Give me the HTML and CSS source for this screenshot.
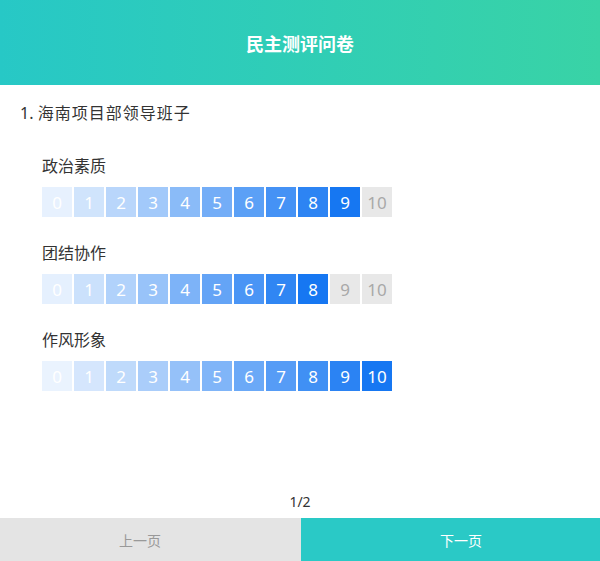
FILE: index.html
```html
<!DOCTYPE html>
<html lang="zh">
<head>
<meta charset="utf-8">
<title>民主测评问卷</title>
<link rel="stylesheet" href="styles.css">
</head>
<body>
<div class="page">
  <header class="header">民主测评问卷</header>
  <main class="content">
    <div class="question"><span class="num">1.</span> <span class="qtext">海南项目部领导班子</span></div>
    <div class="group">
      <div class="label">政治素质</div>
      <div class="scale">
        <span class="box on" style="--a:0.1">0</span>
        <span class="box on" style="--a:0.2">1</span>
        <span class="box on" style="--a:0.3">2</span>
        <span class="box on" style="--a:0.4">3</span>
        <span class="box on" style="--a:0.5">4</span>
        <span class="box on" style="--a:0.6">5</span>
        <span class="box on" style="--a:0.7">6</span>
        <span class="box on" style="--a:0.8">7</span>
        <span class="box on" style="--a:0.9">8</span>
        <span class="box on" style="--a:1">9</span>
        <span class="box">10</span>
      </div>
    </div>
    <div class="group">
      <div class="label">团结协作</div>
      <div class="scale">
        <span class="box on" style="--a:0.111">0</span>
        <span class="box on" style="--a:0.222">1</span>
        <span class="box on" style="--a:0.333">2</span>
        <span class="box on" style="--a:0.444">3</span>
        <span class="box on" style="--a:0.556">4</span>
        <span class="box on" style="--a:0.667">5</span>
        <span class="box on" style="--a:0.778">6</span>
        <span class="box on" style="--a:0.889">7</span>
        <span class="box on" style="--a:1">8</span>
        <span class="box">9</span>
        <span class="box">10</span>
      </div>
    </div>
    <div class="group">
      <div class="label">作风形象</div>
      <div class="scale">
        <span class="box on" style="--a:0.091">0</span>
        <span class="box on" style="--a:0.182">1</span>
        <span class="box on" style="--a:0.273">2</span>
        <span class="box on" style="--a:0.364">3</span>
        <span class="box on" style="--a:0.455">4</span>
        <span class="box on" style="--a:0.545">5</span>
        <span class="box on" style="--a:0.636">6</span>
        <span class="box on" style="--a:0.727">7</span>
        <span class="box on" style="--a:0.818">8</span>
        <span class="box on" style="--a:0.909">9</span>
        <span class="box on" style="--a:1">10</span>
      </div>
    </div>
  </main>
  <div class="pager">1/2</div>
  <footer class="footer">
    <div class="btn prev">上一页</div>
    <div class="btn next">下一页</div>
  </footer>
</div>
</body>
</html>
```
FILE: styles.css
```css
* { box-sizing: border-box; }
html, body { margin: 0; padding: 0; }
body {
  font-family: "Noto Sans", "Noto Sans CJK SC", sans-serif;
  color: #333;
  background: #fff;
}
.page {
  display: flex;
  flex-direction: column;
  height: 561px;
}
.header {
  height: 85px;
  flex: none;
  display: flex;
  align-items: center;
  justify-content: center;
  background: linear-gradient(90deg, #27c8c6 0%, #39d3a6 100%);
  color: #fff;
  font-size: 18px;
  font-weight: 700;
  font-family: "Noto Sans CJK SC", sans-serif;
}
.content {
  flex: 1;
  padding: 16px 0 0 20px;
}
.question {
  font-size: 16px;
  line-height: 24px;
  font-family: "Noto Sans", "Noto Sans CJK SC", sans-serif;
}
.qtext {
  letter-spacing: 1px;
  font-size: 16px;
}
.group {
  margin-left: 22px;
  margin-top: 29px;
}
.group + .group { margin-top: 24px; }
.label {
  font-size: 16px;
  line-height: 22px;
  font-family: "Noto Sans CJK SC", sans-serif;
  color: #333;
}
.scale {
  display: flex;
  gap: 2px;
  margin-top: 11px;
}
.box {
  width: 30px;
  height: 30px;
  display: flex;
  align-items: center;
  justify-content: center;
  font-size: 17px;
  background: #e8e8e8;
  color: #a8a8a8;
}
.box.on {
  color: #fff;
  background: rgba(22, 119, 242, var(--a));
}
.pager {
  flex: none;
  height: 33px;
  display: flex;
  align-items: center;
  justify-content: center;
  font-size: 14px;
  color: #333;
}
.footer {
  flex: none;
  height: 43px;
  display: grid;
  grid-template-columns: 301px 1fr;
}
.btn {
  display: flex;
  align-items: center;
  justify-content: center;
  font-size: 14px;
  font-family: "Noto Sans CJK SC", sans-serif;
}
.prev { background: #e4e4e4; color: #999; padding-right: 21px; }
.next { background: #2ac9c6; color: #fff; padding-left: 21px; }
```
